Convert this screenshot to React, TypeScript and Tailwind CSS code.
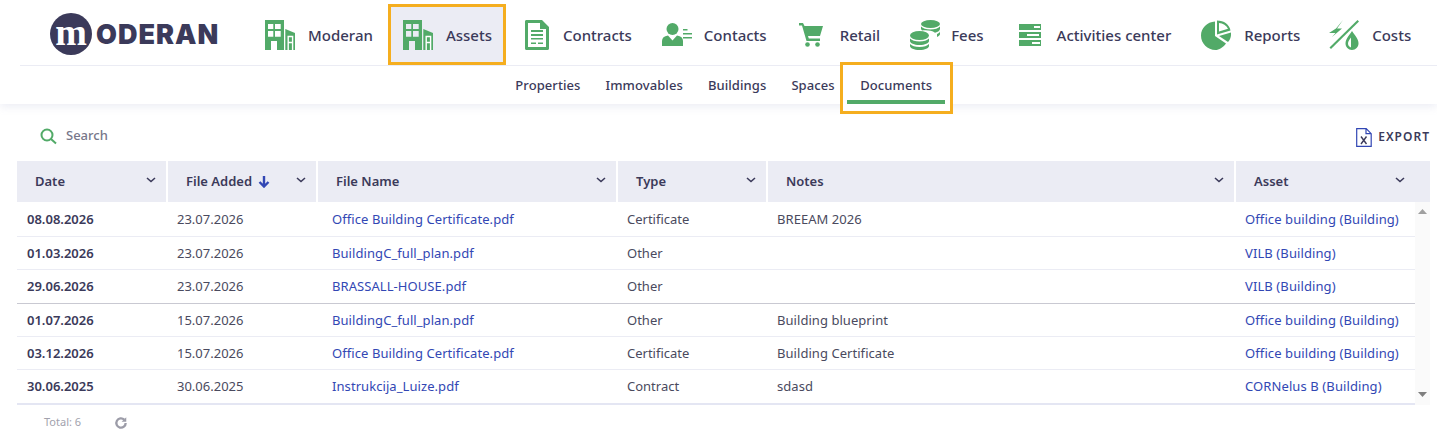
const green = "#52aa68";

const BuildingIcon = () => (
  <svg width="30" height="30" viewBox="0 0 30 30" className="shrink-0">
    <path fill={green} fillRule="evenodd" d="M0 0h19v30h-7V21H6v9H0zM3 4v5h5.300V4zM10 4v5h5.700V4zM3 11v5.700h5.300V11zM10 11v5.700h5.700V11z" />
    <path fill={green} d="M20.300 9L30 13v17h-9.700z" />
    <path d="M23.200 30V16.500h4.400V30M23.200 22.500h4.400" fill="none" stroke="#fff" strokeWidth="1.400" />
  </svg>
);

const ContractIcon = () => (
  <svg width="24" height="30" viewBox="0 0 24 30" className="shrink-0">
    <path fill={green} fillRule="evenodd" d="M0 1.500C0 .600.600 0 1.500 0H17l7 7v21.500c0 .900-.600 1.500-1.500 1.500h-21C.600 30 0 29.400 0 28.500zM3 3v24h18V9h-6V3z" />
    <path fill={green} d="M6 10h12v2H6zM6 14h12v2H6zM6 18h12v1.500H6zM6 22.500h5V24H6zM13 22.500h5V24h-5z" />
  </svg>
);

const ContactIcon = () => (
  <svg width="30" height="24" viewBox="0 0 30 24" className="shrink-0">
    <circle cx="10.500" cy="6" r="6" fill={green} />
    <path fill={green} d="M0 23v-5c0-3 2-5 6-5.500l4.500 5 4.500-5c4 .500 6 2.500 6 5.500v5z" />
    <path fill={green} d="M21 6h4.500v1.500H21zM21 10h9v1.500h-9zM21 14h9v1.500h-9z" />
  </svg>
);

const CartIcon = () => (
  <svg width="24" height="24" viewBox="0 0 24 24" className="shrink-0">
    <path fill={green} d="M0 0h4l1.500 3H24l-3 10H9l.8 2.500H21V18H7.500L3 2.500H0z" />
    <circle cx="8.500" cy="21.500" r="2.300" fill={green} />
    <circle cx="18.500" cy="21.500" r="2.300" fill={green} />
  </svg>
);

const CoinsIcon = () => (
  <svg width="30" height="30" viewBox="0 0 30 30" className="shrink-0">
    <ellipse cx="20.500" cy="4" rx="9.500" ry="4" fill={green} />
    <path fill={green} d="M11 6.500c2 2 5 3 9.500 3s7.500-1 9.500-3V9c0 1.500-2 3-5 3.800C22 10.500 17 10 12 10.500 11.300 9.500 11 9 11 9zM27 14c1.500-.700 3-1.500 3-2.800V14c0 1-1 2-3 3z" />
    <ellipse cx="9.500" cy="15.500" rx="9.500" ry="4.500" fill={green} />
    <path fill={green} d="M0 18.500c2 2 5 3 9.500 3s7.500-1 9.500-3V21c0 2-4 4-9.500 4S0 23 0 21z" />
    <path fill={green} d="M0 24c2 2 5 3 9.500 3s7.500-1 9.500-3v2c0 2-4 4-9.500 4S0 28 0 26z" />
  </svg>
);

const ActivitiesIcon = () => (
  <svg width="22" height="22" viewBox="0 0 22 22" className="shrink-0">
    <path fill={green} fillRule="evenodd" d="M0 0h22v6H0zM15 2v2h6V2zM0 8h22v6H0zM8 10v2h12v-2zM0 16h22v6H0zM13 18v2h8v-2z" />
  </svg>
);

const ReportsIcon = () => (
  <svg width="30" height="30" viewBox="0 0 30 30" className="shrink-0">
    <path fill={green} d="M14 1.500V16l11 7.500C22 27.500 18 30 14.500 30 6.500 30 0 23.500 0 15.500 0 8 6 2 14 1.500z" />
    <path fill={green} fillRule="evenodd" d="M16 .500c7 0 12.500 4 13.500 10L16 14.500zM18 3v8.500l9-2.700C25.500 5.500 22 3.300 18 3z" />
    <path fill={green} d="M30 12.500C30.300 16 29.500 19 27 22l-9-6z" />
  </svg>
);

const CostsIcon = () => (
  <svg width="31" height="30" viewBox="0 0 31 30" className="shrink-0">
    <path fill={green} d="M28.500 0L30 1.500 2 29 .500 27.500z" />
    <path fill={green} d="M14 0L7 8.500l-7 4.500h6.500L3 17l10-8.500H8z" />
    <path fill={green} fillRule="evenodd" d="M23 11c3 4.500 6.500 8 6.500 12.500 0 3.500-2.800 6.500-6.500 6.500s-6.500-3-6.500-6.500C16.500 19 20 15.500 23 11zM22 17.500c-1.500 2-3 4-3 6 0 2 1.200 3.300 3 4z" />
  </svg>
);

const navItems = [
  { label: "Moderan", icon: <BuildingIcon />, box: "ml-[46px] gap-[13px]" },
  { label: "Assets", icon: <BuildingIcon />, box: "ml-[15px] gap-[13px] border-[3px] border-[#f5ae1f] bg-[#ebecf4] pl-3 pr-[11px]" },
  { label: "Contracts", icon: <ContractIcon />, box: "ml-[19px] gap-[14px]" },
  { label: "Contacts", icon: <ContactIcon />, box: "ml-[30px] gap-3" },
  { label: "Retail", icon: <CartIcon />, box: "ml-[32px] gap-[17px]" },
  { label: "Fees", icon: <CoinsIcon />, box: "ml-[30px] gap-[11px]" },
  { label: "Activities center", icon: <ActivitiesIcon />, box: "ml-[35px] gap-4" },
  { label: "Reports", icon: <ReportsIcon />, box: "ml-[30px] gap-[13px]" },
  { label: "Costs", icon: <CostsIcon />, box: "ml-[29px] gap-3" },
];

const subItems = ["Properties", "Immovables", "Buildings"];

const columns = [
  { title: "Date", head: "w-[151px] pl-[18px] pr-[10px]", cell: "w-[151px] pl-[10px] font-semibold text-[#3b3a5a]" },
  { title: "File Added", head: "w-[150px] pl-[18px] pr-[10px]", cell: "w-[155px] pl-[9px]", sorted: true },
  { title: "File Name", head: "w-[300px] pl-[18px] pr-[10px]", cell: "w-[295px] pl-[9px] tracking-[0.07px] text-[#3247b4]" },
  { title: "Type", head: "w-[150px] pl-[18px] pr-[10px]", cell: "w-[150px] pl-[9px]" },
  { title: "Notes", head: "w-[468px] pl-[18px] pr-[10px]", cell: "w-[468px] pl-[9px] tracking-[0.05px]" },
  { title: "Asset", head: "w-[194px] pl-[18px] pr-[25px]", cell: "w-[179px] pl-[9px] tracking-[0.1px] text-[#3247b4]" },
];

const rows = [
  { h: "h-[34px] border-b border-[#ebecf4]", v: ["08.08.2026", "23.07.2026", "Office Building Certificate.pdf", "Certificate", "BREEAM 2026", "Office building (Building)"] },
  { h: "h-[33px] pt-[2px] border-b border-[#ebecf4]", v: ["01.03.2026", "23.07.2026", "BuildingC_full_plan.pdf", "Other", "", "VILB (Building)"] },
  { h: "h-[34px] border-b border-[#c9c9d2]", v: ["29.06.2026", "23.07.2026", "BRASSALL-HOUSE.pdf", "Other", "", "VILB (Building)"] },
  { h: "h-[33px] pt-[2px] border-b border-[#ebecf4]", v: ["01.07.2026", "15.07.2026", "BuildingC_full_plan.pdf", "Other", "Building blueprint", "Office building (Building)"] },
  { h: "h-[33px] pt-[2px] border-b border-[#ebecf4]", v: ["03.12.2026", "15.07.2026", "Office Building Certificate.pdf", "Certificate", "Building Certificate", "Office building (Building)"] },
  { h: "h-[35px] border-b-2 border-[#e4e6f3]", v: ["30.06.2025", "30.06.2025", "Instrukcija_Luize.pdf", "Contract", "sdasd", "CORNelus B (Building)"] },
];

const Chevron = () => (
  <svg width="10" height="6" viewBox="0 0 10 6" className="ml-auto mb-[3px] shrink-0">
    <path d="M1 1l4 3.500L9 1" fill="none" stroke="#3b3a5a" strokeWidth="1.600" />
  </svg>
);

export default function App() {
  return (
    <div className="h-[448px] w-[1437px] overflow-hidden bg-white text-[#3b3a5a] [font-family:'Noto_Sans',sans-serif]">
      <header className="h-[104px] shadow-[0_3px_8px_rgba(235,236,244,0.9)]">
        <div className="ml-5 flex h-[66px] items-end border-b border-[#ebecf4] pt-[5px]">
          <div className="ml-[30px] flex h-[60px] w-[169px] shrink-0 items-center pb-[2px]">
            <div className="flex h-[42px] w-[42px] shrink-0 items-center justify-center rounded-full bg-[#3b3a5a] pb-[5px] text-[38px] font-bold leading-none text-white [font-family:'Liberation_Serif',serif]">
              m
            </div>
            <span className="ml-[4px] text-[27px] font-black leading-none tracking-[1px] [font-family:Inter,sans-serif]">ODERAN</span>
          </div>
          {navItems.map((item) => (
            <div key={item.label} className={`flex h-[61px] shrink-0 items-center text-[15px] font-medium ${item.box}`}>
              {item.icon}
              <span className="mt-[2px]">{item.label}</span>
            </div>
          ))}
        </div>
        <nav className="flex h-[38px] items-start justify-center pl-[31px] text-[13px] font-medium tracking-[0.08px]">
          {subItems.map((label) => (
            <span key={label} className="mr-[25px] pt-[10px]">{label}</span>
          ))}
          <span className="mr-[5px] pt-[10px]">Spaces</span>
          <div className="relative z-10 -mt-[4px] flex h-[52px] w-[113px] flex-col items-center border-[3px] border-[#f5ae1f] bg-white pt-[11px]">
            <span>Documents</span>
            <span className="mt-[4px] h-1 w-[98px] bg-[#52aa68]" />
          </div>
        </nav>
      </header>

      <main className="pl-[17px] pr-[7px]">
        <div className="flex h-[57px] items-center justify-between pt-[9px]">
          <div className="ml-[23px] flex items-center gap-[9px] pb-[2px] text-[13px] font-medium text-[#77778a]">
            <svg width="17" height="17" viewBox="0 0 17 17">
              <circle cx="7" cy="7" r="5.500" fill="none" stroke="#52aa68" strokeWidth="2" />
              <path d="M11 11l5 4.500" stroke="#52aa68" strokeWidth="2" />
            </svg>
            <span>Search</span>
          </div>
          <div className="flex items-center gap-[6px] text-xs font-semibold tracking-[1px]">
            <svg width="16" height="19" viewBox="0 0 16 19">
              <path d="M.700.700h9.500l5 5v12.600H.700z M10 .700v5h5" fill="none" stroke="#3247b4" strokeWidth="1.200" />
              <path d="M5 8.500l5.500 7.500M10.500 8.500L5 16" stroke="#3b3a5a" strokeWidth="1.400" />
            </svg>
            <span>EXPORT</span>
          </div>
        </div>

        <div className="flex w-[1413px] text-[13px] font-semibold">
          {columns.map((col) => (
            <div key={col.title} className={`flex h-[41px] items-center border-r-2 border-white bg-[#ebecf4] last:border-r-0 ${col.head}`}>
              <span>{col.title}</span>
              {col.sorted && (
                <svg width="12" height="13" viewBox="0 0 12 13" className="ml-[6px] shrink-0">
                  <path d="M6 1v10M1.500 7L6 11.500 10.500 7" fill="none" stroke="#3247b4" strokeWidth="2.400" />
                </svg>
              )}
              <Chevron />
            </div>
          ))}
        </div>

        <div className="relative w-[1413px] pr-[15px] pt-px">
          {rows.map((row) => (
            <div key={row.v[0]} className={`flex items-center text-[13px] text-[#4a4a5e] ${row.h}`}>
              {row.v.map((value, j) => (
                <div key={j} className={`shrink-0 truncate ${columns[j].cell}`}>{value}</div>
              ))}
            </div>
          ))}
          <div className="absolute bottom-0 right-0 top-0 flex w-[15px] flex-col items-center justify-between bg-[#fafafa] pb-[8px] pt-[7px]">
            <svg width="9" height="5" viewBox="0 0 9 5"><path d="M4.500 0L9 5H0z" fill="#a0a0a0" /></svg>
            <svg width="9" height="5" viewBox="0 0 9 5"><path d="M4.500 5L9 0H0z" fill="#7f7f7f" /></svg>
          </div>
        </div>

        <div className="flex h-[35px] items-center pl-[27px] text-[11px] text-[#a2a2ad]">
          <span>Total: 6</span>
          <svg width="14" height="14" viewBox="0 0 24 24" className="ml-[33px]">
            <path d="M20 12a8 8 0 1 1-2.500-5.800" fill="none" stroke="#9c9ca8" strokeWidth="4" />
            <path d="M21 2v8h-8z" fill="#9c9ca8" />
          </svg>
        </div>
      </main>
    </div>
  );
}
